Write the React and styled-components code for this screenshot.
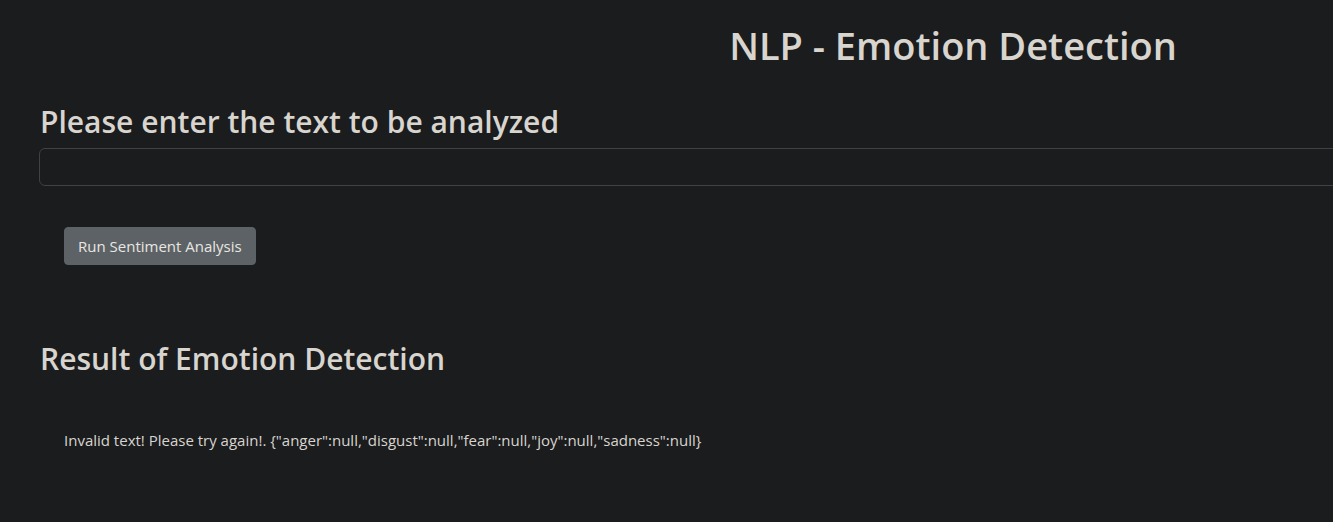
import React from 'react';
import styled, { createGlobalStyle } from 'styled-components';

const GlobalStyle = createGlobalStyle`
    html, body {
        margin: 0;
        padding: 0;
        background: #1b1c1e;
        overflow: hidden;
    }
    body {
        font-family: "Open Sans", "Noto Sans", sans-serif;
        color: #d8d4ce;
    }
`;

const App = () => {
    return (
        <>
            <GlobalStyle />
            <Page>
                <Title>NLP - Emotion Detection</Title>
                <Section>
                    <SectionTitle>Please enter the text to be analyzed</SectionTitle>
                    <TextInput type="text" />
                </Section>
                <ButtonRow>
                    <RunButton>Run Sentiment Analysis</RunButton>
                </ButtonRow>
                <ResultSection>
                    <SectionTitle>Result of Emotion Detection</SectionTitle>
                    <ResultText>
                        Invalid text! Please try again!. {'{"anger":null,"disgust":null,"fear":null,"joy":null,"sadness":null}'}
                    </ResultText>
                </ResultSection>
            </Page>
        </>
    );
};

const Page = styled.div`
    width: 1906px;
    padding-top: 23px;
`;

const Title = styled.h1`
    margin: 0;
    text-align: center;
    font-size: 38px;
    font-weight: 600;
    line-height: 1.2;
    color: #d8d4ce;
`;

const Section = styled.div`
    padding: 0 39px;
    margin-top: 35px;
`;

const SectionTitle = styled.h2`
    margin: 0 0 8px 1px;
    font-size: 30px;
    font-weight: 600;
    line-height: 1.2;
    color: #d8d4ce;
`;

const TextInput = styled.input`
    display: block;
    box-sizing: border-box;
    width: 100%;
    height: 38px;
    background: #1b1c1e;
    border: 1px solid #3e4246;
    border-radius: 6px;
    color: #d8d4ce;
    outline: none;
`;

const ButtonRow = styled.div`
    padding: 41px 64px 0;
`;

const RunButton = styled.button`
    box-sizing: border-box;
    height: 38px;
    padding: 0 13px;
    background: #5c6266;
    border: 1px solid #5c6266;
    border-radius: 4px;
    color: #e9e6e1;
    font-family: "Open Sans", "Noto Sans", sans-serif;
    font-size: 15px;
`;

const ResultSection = styled.div`
    padding: 76px 39px 0;
`;

const ResultText = styled.p`
    margin: 53px 0 0 25px;
    font-size: 15px;
    color: #d8d4ce;
`;

export default App;
